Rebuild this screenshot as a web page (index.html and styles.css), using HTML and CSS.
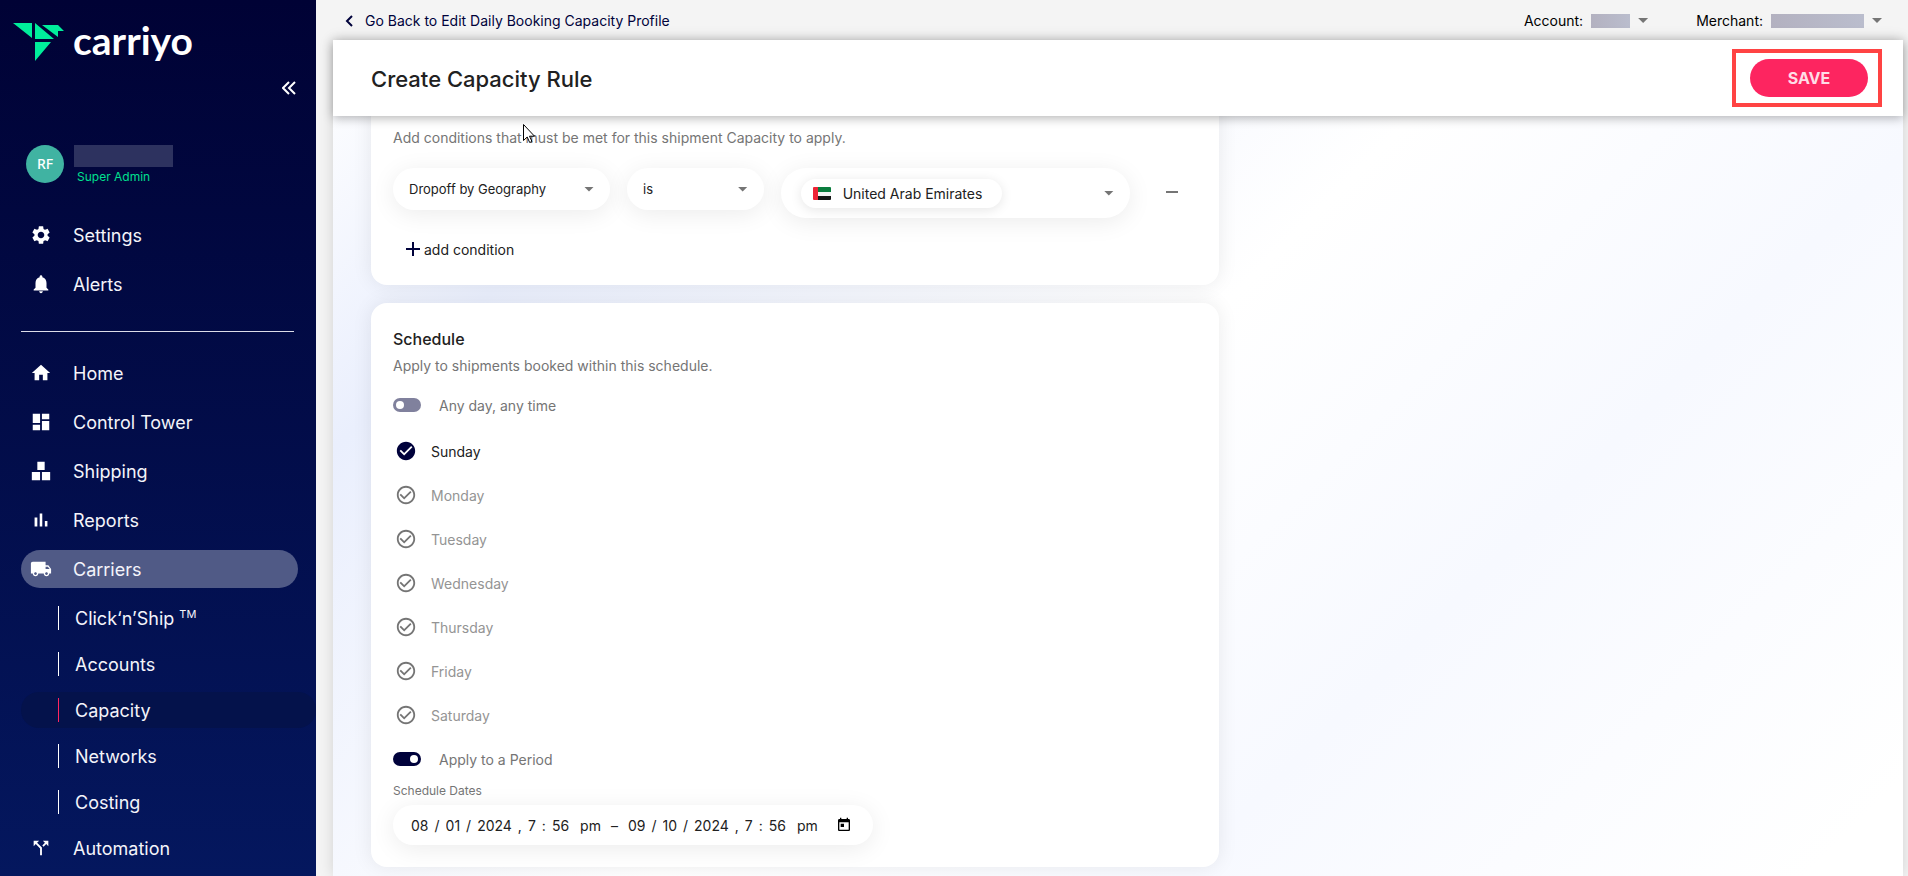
FILE: index.html
```html
<!DOCTYPE html>
<html lang="en">
<head>
  <meta charset="UTF-8">
  <meta name="viewport" content="width=device-width, initial-scale=1.0">
  <title>Create Capacity Rule</title>
  <link rel="stylesheet" href="styles.css">
</head>
<body>
  <!-- shared icons -->
  <svg class="sprite" aria-hidden="true">
    <symbol id="check-outline" viewBox="0 0 24 24">
      <path d="M16.59 7.58 10 14.17l-3.59-3.58L5 12l5 5 8-8zM12 2C6.48 2 2 6.48 2 12s4.48 10 10 10 10-4.48 10-10S17.52 2 12 2zm0 18c-4.42 0-8-3.58-8-8s3.58-8 8-8 8 3.58 8 8-3.58 8-8 8z"/>
    </symbol>
    <symbol id="check-filled" viewBox="0 0 24 24">
      <path d="M12 2C6.48 2 2 6.48 2 12s4.48 10 10 10 10-4.48 10-10S17.52 2 12 2zm-2 15-5-5 1.41-1.41L10 14.17l7.59-7.59L19 8l-9 9z"/>
    </symbol>
  </svg>

  <div class="app">
    <aside class="sidebar">
      <a class="logo" href="#">
        <svg class="logo-mark" viewBox="0 0 51 38" aria-hidden="true">
          <path d="M0 0h19v15zM22 0l19 16H22zM22 19h16L22 38zM29 2h16l6 6h-6v6z"/>
        </svg>
        <span class="logo-text">carriyo</span>
      </a>

      <button class="collapse" aria-label="Collapse menu">
        <svg viewBox="0 0 14 14" aria-hidden="true"><path d="M7 1 1 7l6 6M13 1 7 7l6 6"/></svg>
      </button>

      <div class="profile">
        <div class="avatar">RF</div>
        <div class="profile-info">
          <div class="profile-name"></div>
          <div class="profile-role">Super Admin</div>
        </div>
      </div>

      <nav>
        <ul class="nav">
          <li><a class="nav-link" href="#">
            <svg viewBox="0 0 24 24"><path d="M19.14 12.94c.04-.3.06-.61.06-.94 0-.32-.02-.64-.07-.94l2.03-1.58c.18-.14.23-.41.12-.61l-1.92-3.32c-.12-.22-.37-.29-.59-.22l-2.39.96c-.5-.38-1.03-.7-1.62-.94l-.36-2.54c-.04-.24-.24-.41-.48-.41h-3.84c-.24 0-.43.17-.47.41l-.36 2.54c-.59.24-1.13.57-1.62.94l-2.39-.96c-.22-.08-.47 0-.59.22L2.74 8.87c-.12.21-.08.47.12.61l2.03 1.58c-.05.3-.09.63-.09.94s.02.64.07.94l-2.03 1.58c-.18.14-.23.41-.12.61l1.92 3.32c.12.22.37.29.59.22l2.39-.96c.5.38 1.03.7 1.62.94l.36 2.54c.05.24.24.41.48.41h3.84c.24 0 .44-.17.47-.41l.36-2.54c.59-.24 1.13-.56 1.62-.94l2.39.96c.22.08.47 0 .59-.22l1.92-3.32c.12-.22.07-.47-.12-.61l-2.01-1.58zM12 15.6c-1.98 0-3.6-1.62-3.6-3.6s1.62-3.6 3.6-3.6 3.6 1.62 3.6 3.6-1.62 3.6-3.6 3.6z"/></svg>
            Settings</a></li>
          <li><a class="nav-link" href="#">
            <svg viewBox="0 0 24 24"><path d="M12 22c1.1 0 2-.9 2-2h-4c0 1.1.89 2 2 2zm6-6v-5c0-3.07-1.64-5.64-4.5-6.32V4c0-.83-.67-1.5-1.5-1.5s-1.5.67-1.5 1.5v.68C7.63 5.36 6 7.92 6 11v5l-2 2v1h16v-1l-2-2z"/></svg>
            Alerts</a></li>
        </ul>
        <hr class="divider">
        <ul class="nav">
          <li><a class="nav-link" href="#">
            <svg viewBox="0 0 24 24"><path d="M10 20v-6h4v6h5v-8h3L12 3 2 12h3v8z"/></svg>
            Home</a></li>
          <li><a class="nav-link" href="#">
            <svg viewBox="0 0 24 24"><path d="M3 13h8V3H3v10zm0 8h8v-6H3v6zm10 0h8V11h-8v10zm0-18v6h8V3h-8z"/></svg>
            Control Tower</a></li>
          <li><a class="nav-link" href="#">
            <svg viewBox="0 0 24 24"><path d="M8 2h8v9H8zM2 13h9v9H2zM13 13h9v9h-9z"/></svg>
            Shipping</a></li>
          <li><a class="nav-link" href="#">
            <svg viewBox="0 0 24 24"><path d="M5 9.2h3V19H5zM10.6 5h2.8v14h-2.8zm5.6 8H19v6h-2.8z"/></svg>
            Reports</a></li>
          <li><a class="nav-link active" href="#">
            <svg viewBox="0 0 24 24"><path d="M20 8h-3V4H3c-1.1 0-2 .9-2 2v11h2c0 1.66 1.34 3 3 3s3-1.34 3-3h6c0 1.66 1.34 3 3 3s3-1.34 3-3h2v-5l-3-4zM6 18.5c-.83 0-1.5-.67-1.5-1.5s.67-1.5 1.5-1.5 1.5.67 1.5 1.5-.67 1.5-1.5 1.5zm13.5-9 1.96 2.5H17V9.5h2.5zm-1.5 9c-.83 0-1.5-.67-1.5-1.5s.67-1.5 1.5-1.5 1.5.67 1.5 1.5-.67 1.5-1.5 1.5z"/></svg>
            Carriers</a>
            <ul class="subnav">
              <li><a class="sub-link" href="#"><span>Click‘n’Ship <sup>TM</sup></span></a></li>
              <li><a class="sub-link" href="#">Accounts</a></li>
              <li><a class="sub-link current" href="#">Capacity</a></li>
              <li><a class="sub-link" href="#">Networks</a></li>
              <li><a class="sub-link" href="#">Costing</a></li>
            </ul>
          </li>
          <li><a class="nav-link" href="#">
            <svg viewBox="0 0 24 24"><path d="m14 4 2.29 2.29-2.88 2.88 1.42 1.42 2.88-2.88L20 10V4zM10 4H4v6l2.29-2.29 4.71 4.7V20h2v-8.41l-5.29-5.3z"/></svg>
            Automation</a></li>
        </ul>
      </nav>
    </aside>

    <main class="main">
      <div class="topbar">
        <a class="back" href="#">
          <svg viewBox="0 0 8 12" aria-hidden="true"><path d="M7 1 2 6l5 5"/></svg>
          Go Back to Edit Daily Booking Capacity Profile
        </a>
        <div class="pickers">
          <div class="picker">
            <label for="account">Account:</label>
            <select id="account" class="masked account"><option></option></select>
            <span class="caret"></span>
          </div>
          <div class="picker">
            <label for="merchant">Merchant:</label>
            <select id="merchant" class="masked merchant"><option></option></select>
            <span class="caret"></span>
          </div>
        </div>
      </div>

      <div class="panel">
        <header class="panel-header">
          <h1>Create Capacity Rule</h1>
          <div class="highlight">
            <button class="save">SAVE</button>
          </div>
        </header>

        <div class="content">
          <section class="card conditions">
            <h2>Conditions</h2>
            <p class="description">Add conditions that must be met for this shipment Capacity to apply.</p>
            <div class="condition">
              <div class="select">
                <select aria-label="Condition"><option>Dropoff by Geography</option></select>
                <span class="caret"></span>
              </div>
              <div class="select">
                <select aria-label="Operator"><option>is</option></select>
                <span class="caret"></span>
              </div>
              <button class="countries" aria-label="Countries: United Arab Emirates">
                <span class="chip">
                  <svg class="flag" viewBox="0 0 18 13" aria-hidden="true">
                    <path fill="#0b7d3e" d="M5 0h12a1 1 0 0 1 1 1v4H5z"/>
                    <path fill="#f4f4f4" d="M5 5h13v4H5z"/>
                    <path fill="#151515" d="M5 9h13v3a1 1 0 0 1-1 1H5z"/>
                    <path fill="#ee2436" d="M1 0h4v13H1a1 1 0 0 1-1-1V1a1 1 0 0 1 1-1z"/>
                  </svg>
                  United Arab Emirates
                </span>
                <span class="caret"></span>
              </button>
              <button class="remove" aria-label="Remove condition"></button>
            </div>
            <button class="add">
              <svg viewBox="0 0 14 14" aria-hidden="true"><path d="M7 0v14M0 7h14"/></svg>
              add condition
            </button>
          </section>

          <section class="card">
            <h2>Schedule</h2>
            <p class="description">Apply to shipments booked within this schedule.</p>
            <label class="switch"><input type="checkbox">Any day, any time</label>

            <div class="days">
              <label class="day"><input type="checkbox" checked><svg><use href="#check-filled"/></svg>Sunday</label>
              <label class="day"><input type="checkbox"><svg><use href="#check-outline"/></svg>Monday</label>
              <label class="day"><input type="checkbox"><svg><use href="#check-outline"/></svg>Tuesday</label>
              <label class="day"><input type="checkbox"><svg><use href="#check-outline"/></svg>Wednesday</label>
              <label class="day"><input type="checkbox"><svg><use href="#check-outline"/></svg>Thursday</label>
              <label class="day"><input type="checkbox"><svg><use href="#check-outline"/></svg>Friday</label>
              <label class="day"><input type="checkbox"><svg><use href="#check-outline"/></svg>Saturday</label>
            </div>

            <label class="switch"><input type="checkbox" checked>Apply to a Period</label>

            <label class="field-label" for="start-month">Schedule Dates</label>
            <div class="dates">
              <div class="date">
                <input id="start-month" type="text" value="08" aria-label="Start month"><span>/</span>
                <input type="text" value="01" aria-label="Start day"><span>/</span>
                <input type="text" value="2024" aria-label="Start year"><span>,</span>
                <input type="text" value="7" aria-label="Start hour"><span>:</span>
                <input type="text" value="56" aria-label="Start minute">
                <input class="period" type="text" value="pm" aria-label="Start am or pm">
              </div>
              <span>–</span>
              <div class="date">
                <input type="text" value="09" aria-label="End month"><span>/</span>
                <input type="text" value="10" aria-label="End day"><span>/</span>
                <input type="text" value="2024" aria-label="End year"><span>,</span>
                <input type="text" value="7" aria-label="End hour"><span>:</span>
                <input type="text" value="56" aria-label="End minute">
                <input class="period" type="text" value="pm" aria-label="End am or pm">
              </div>
              <button class="calendar" aria-label="Open calendar">
                <svg viewBox="0 0 24 24" aria-hidden="true"><path d="M19 3h-1V1h-2v2H8V1H6v2H5c-1.11 0-1.99.9-1.99 2L3 19c0 1.1.89 2 2 2h14c1.1 0 2-.9 2-2V5c0-1.1-.9-2-2-2zm0 16H5V8h14v11zM7 10h5v5H7z"/></svg>
              </button>
            </div>
          </section>
        </div>

        <svg class="pointer" viewBox="0 0 12 19" aria-hidden="true">
          <path d="M.5.5v16l3.7-3.5 2.5 5.5 2.3-1-2.5-5.3h5z"/>
        </svg>
      </div>
    </main>
  </div>
</body>
</html>
```

FILE: styles.css
```css
* {
  margin: 0;
  padding: 0;
  box-sizing: border-box;
}

body {
  font-family: Inter, "Liberation Sans", sans-serif;
  font-size: 14px;
  color: #212121;
  background-color: #f4f4f4;
}

button,
input,
select {
  font: inherit;
  color: inherit;
  border: none;
  background: none;
  outline: none;
}

button {
  cursor: pointer;
}

a {
  color: inherit;
  text-decoration: none;
}

ul {
  list-style: none;
}

.sprite {
  display: none;
}

.app {
  display: grid;
  grid-template-columns: 316px 1fr;
  height: 100vh;
  overflow: hidden;
}

/* Sidebar */

.sidebar {
  display: flex;
  flex-direction: column;
  color: #f4f4fa;
  background: linear-gradient(#000235, #04175e);
  overflow: hidden;
}

.logo {
  display: flex;
  gap: 9px;
  height: 81px;
  padding: 23px 13px 0;
}

.logo-mark {
  width: 51px;
  height: 38px;
  fill: #00ee9b;
}

.logo-text {
  font-family: Lato, sans-serif;
  font-size: 39px;
  font-weight: 700;
  line-height: 34px;
  color: #fff;
}

.collapse {
  align-self: flex-end;
  width: 14px;
  height: 14px;
  margin-right: 20px;
}

.collapse svg {
  display: block;
  fill: none;
  stroke: #fff;
  stroke-width: 2;
}

.profile {
  display: flex;
  gap: 10px;
  height: 38px;
  margin: 50px 0 33px 26px;
}

.avatar {
  width: 38px;
  height: 38px;
  border-radius: 50%;
  background-color: #40b3a2;
  color: #fff;
  font-family: "Noto Sans", sans-serif;
  font-weight: 500;
  line-height: 38px;
  text-align: center;
}

.profile-name {
  width: 99px;
  height: 22px;
  background-color: #2d325f;
}

.profile-role {
  padding-left: 3px;
  font-size: 12px;
  line-height: 20px;
  color: #00e08f;
}

.nav {
  display: grid;
  gap: 11px;
}

.nav-link {
  display: flex;
  align-items: center;
  gap: 21px;
  height: 38px;
  margin: 0 18px 0 21px;
  padding-left: 9px;
  border-radius: 19px;
  font-size: 18px;
}

.nav-link svg {
  width: 22px;
  height: 22px;
  fill: #fff;
}

.nav-link.active {
  background-color: #505a86;
}

.divider {
  height: 1px;
  margin: 28px 22px 22px 21px;
  border: none;
  background-color: #dcdce8;
}

.subnav {
  display: grid;
  gap: 10px;
  margin-top: 12px;
  margin-bottom: -2px;
}

.sub-link {
  display: flex;
  align-items: center;
  gap: 16px;
  height: 36px;
  margin-left: 21px;
  padding-left: 37px;
  border-radius: 18px;
  font-size: 18px;
}

.sub-link::before {
  content: "";
  width: 1px;
  height: 24px;
  background-color: #fff;
}

.sub-link.current {
  background-color: #04124b;
}

.sub-link.current::before {
  background-color: #ff2560;
}

.sub-link sup {
  font-size: 11px;
  line-height: 0;
}

/* Top bar */

.main {
  display: flex;
  flex-direction: column;
  min-width: 0;
  padding: 0 5px 0 17px;
}

.topbar {
  display: flex;
  align-items: center;
  justify-content: space-between;
  height: 40px;
  padding: 1px 21px 0 12px;
}

.back {
  display: flex;
  align-items: center;
  gap: 12px;
  color: #00023b;
}

.back svg {
  width: 8px;
  height: 12px;
  fill: none;
  stroke: #00023b;
  stroke-width: 2;
}

.pickers {
  display: flex;
  gap: 48px;
}

.picker {
  display: flex;
  align-items: center;
  gap: 8px;
  color: #000;
}

.masked {
  height: 14px;
  appearance: none;
  background: linear-gradient(90deg, #b3b1c0, #babdcd);
}

.account {
  width: 39px;
}

.merchant {
  width: 93px;
}

.caret {
  width: 10px;
  height: 5px;
  background-color: #757575;
  clip-path: polygon(0 0, 100% 0, 50% 100%);
  pointer-events: none;
}

/* Page panel */

.panel {
  position: relative;
  flex: 1;
  min-height: 0;
  background: linear-gradient(135deg, #fff, #eaeffd 17%, #fff 48%, #f7f9ff 70%, #fff 96%);
  box-shadow: 0 0 14px rgba(0, 0, 0, 0.14);
}

.panel-header {
  position: relative;
  z-index: 1;
  display: flex;
  align-items: center;
  justify-content: space-between;
  height: 76px;
  padding: 0 21px 0 38px;
  background-color: #fff;
  box-shadow: 0 2px 10px rgba(0, 0, 0, 0.3);
}

h1,
h2 {
  font-weight: 500;
  font-optical-sizing: none;
}

h1 {
  padding-top: 2px;
  font-size: 22px;
}

h2 {
  font-size: 16px;
  line-height: 24px;
}

.highlight {
  padding: 6px 10px 6px 14px;
  border: 4px solid #ff4343;
}

.save {
  display: block;
  width: 118px;
  height: 38px;
  border-radius: 19px;
  background-color: #fd2560;
  color: #ffdce6;
  font-size: 16px;
  font-weight: 700;
}

/* the list is scrolled a little way under the header */
.content {
  display: grid;
  gap: 18px;
  width: 54%;
  margin: -43px 0 0 38px;
}

.card {
  padding: 24px 22px 22px;
  border-radius: 16px;
  background-color: #fff;
  box-shadow: 0 0 20px rgba(0, 0, 0, 0.08);
}

.description {
  margin: 3px 0 13px;
  line-height: 24px;
  color: #757575;
}

.conditions .description {
  margin-top: 5px;
}

.condition {
  display: grid;
  grid-template-columns: 27% 17% 1fr 50px;
  gap: 17px;
  align-items: start;
  margin-top: 18px;
}

.select {
  display: flex;
  align-items: center;
  height: 42px;
  padding-right: 16px;
  border-radius: 21px;
  background-color: #fff;
  box-shadow: 0 4px 24px rgba(0, 0, 0, 0.08);
}

.select select {
  flex: 1;
  min-width: 0;
  height: 42px;
  padding-left: 16px;
  font-size: 13px;
  appearance: none;
}

.countries {
  display: flex;
  align-items: center;
  justify-content: space-between;
  height: 50px;
  padding: 0 16px 0 20px;
  border-radius: 25px;
  background-color: #fff;
  box-shadow: 0 4px 24px rgba(0, 0, 0, 0.08);
}

.chip {
  display: flex;
  align-items: center;
  gap: 12px;
  height: 29px;
  padding: 0 20px 0 12px;
  border-radius: 15px;
  background-color: #fff;
  box-shadow: 0 2px 12px rgba(0, 0, 0, 0.1);
}

.flag {
  width: 18px;
  height: 13px;
}

.remove {
  display: flex;
  align-items: center;
  justify-content: center;
  height: 48px;
}

.remove::before {
  content: "";
  width: 12px;
  height: 2px;
  background-color: #757575;
}

.add {
  display: flex;
  align-items: center;
  gap: 4px;
  height: 28px;
  margin-top: 17px;
  padding-left: 13px;
}

.add svg {
  width: 14px;
  height: 14px;
  stroke: #00023b;
  stroke-width: 2;
}

/* Schedule */

.switch {
  display: flex;
  align-items: center;
  gap: 18px;
  width: fit-content;
  height: 28px;
  color: #757575;
}

.switch input {
  display: flex;
  align-items: center;
  width: 28px;
  height: 14px;
  padding: 0 3px;
  border-radius: 7px;
  background-color: #80819d;
  appearance: none;
}

.switch input::before {
  content: "";
  width: 8px;
  height: 8px;
  border-radius: 50%;
  background-color: #fff;
}

.switch input:checked {
  justify-content: flex-end;
  background-color: #00023b;
}

.days {
  display: grid;
  justify-items: start;
  margin: 10px 0 8px;
}

.day {
  display: flex;
  align-items: center;
  gap: 14px;
  height: 44px;
  padding-left: 2px;
  color: #949494;
}

.day input {
  position: absolute;
  opacity: 0;
}

.day svg {
  width: 22px;
  height: 22px;
  fill: #757575;
}

.day:has(:checked) {
  color: #212121;
}

.day :checked + svg {
  fill: #00023b;
}

.field-label {
  display: block;
  margin: 10px 0 6px;
  font-size: 12px;
  line-height: 16px;
  color: #757575;
}

.dates {
  display: flex;
  align-items: center;
  gap: 10px;
  width: 480px;
  max-width: 100%;
  height: 40px;
  padding: 0 21px 0 18px;
  border-radius: 20px;
  background-color: #fff;
  box-shadow: 0 4px 24px rgba(0, 0, 0, 0.08);
}

.date {
  display: flex;
  align-items: center;
  gap: 6px;
}

.date input {
  field-sizing: content;
  height: 40px;
}

.date .period {
  margin-left: 5px;
}

.calendar {
  margin-left: auto;
}

.calendar svg {
  display: block;
  width: 16px;
  height: 16px;
  fill: #000;
}

/* Mouse pointer over the page */

.pointer {
  position: absolute;
  top: 84px;
  left: 190px;
  z-index: 2;
  width: 12px;
  height: 19px;
  fill: #fff;
  stroke: #000;
}
```
